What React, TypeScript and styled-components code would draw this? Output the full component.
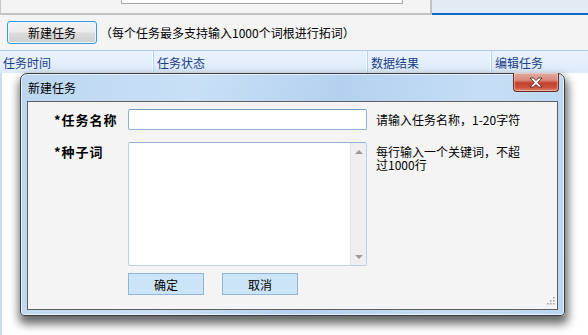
import styled, { createGlobalStyle } from "styled-components";

const GlobalStyle = createGlobalStyle`
    html, body {
        margin: 0;
        padding: 0;
        background: #ffffff;
    }
    body {
        font-family: "Noto Sans CJK SC", "Liberation Sans", sans-serif;
        font-size: 12px;
        color: #000;
    }
`;

const Page = styled.div`
    position: relative;
    width: 588px;
    height: 335px;
    overflow: hidden;
    display: flex;
    flex-direction: column;
    background: #ffffff;
`;

const TopStrip = styled.div`
    display: flex;
    height: 15px;
    flex-shrink: 0;
    background: #f4f4f4;
`;

const SearchPanel = styled.div`
    box-sizing: border-box;
    width: 432px;
    height: 15px;
    display: flex;
    align-items: flex-start;
    padding-left: 120px;
    border-left: 1px solid #c8c8c8;
    border-right: 2px solid #c2c2c2;
    border-bottom: 2px solid #c2c2c2;
`;

const SearchStub = styled.div`
    box-sizing: border-box;
    width: 282px;
    height: 4px;
    background: #ffffff;
    border: 1px solid #a9a9a9;
    border-top: none;
`;

const TabStrip = styled.div`
    flex: 1;
    box-sizing: border-box;
    height: 15px;
    background: #e3eaf3;
    border-bottom: 2px solid #0f6bc6;
`;

const Toolbar = styled.div`
    display: flex;
    align-items: center;
    height: 35px;
    padding: 0 0 5px 7px;
    box-sizing: border-box;
    background: #f4f4f4;
    flex-shrink: 0;
`;

const ToolButton = styled.button`
    box-sizing: border-box;
    width: 90px;
    height: 23px;
    margin-top: 4px;
    padding: 0;
    border: 1px solid #3c9be0;
    border-radius: 3px;
    background: linear-gradient(#f3f3f3 0%, #ebebeb 48%, #dcdcdc 52%, #cfcfcf 100%);
    box-shadow: inset 0 0 0 1px #eaf4fc;
    font-family: inherit;
    font-size: 12px;
    color: #000;
`;

const ToolHint = styled.span`
    margin: 4px 0 0 3px;
    font-size: 12px;
    color: #000;
`;

const HeaderRow = styled.div`
    display: flex;
    height: 23px;
    flex-shrink: 0;
    box-sizing: border-box;
    border-top: 1px solid #a9cbeb;
    background: linear-gradient(#eaf3fc, #dcebf9);
`;

const HeaderCell = styled.div<{ $w?: number }>`
    box-sizing: border-box;
    ${(p) => (p.$w ? `width: ${p.$w}px;` : "flex: 1;")}
    display: flex;
    align-items: center;
    padding-left: 3px;
    color: #1c3f89;
    font-size: 12px;
    border-right: 1px solid #b4d1ee;
    box-shadow: inset -1px 0 0 #f6fbff;
    &:last-child {
        border-right: none;
        box-shadow: none;
    }
`;

const TableBody = styled.div`
    flex: 1;
    background: #ffffff;
    border-left: 2px solid #c8ddf1;
`;

const Dialog = styled.div`
    position: absolute;
    left: 20px;
    top: 73px;
    width: 545px;
    height: 243px;
    box-sizing: border-box;
    display: flex;
    flex-direction: column;
    border: 1px solid #3e3e3e;
    border-radius: 7px 7px 4px 4px;
    background: linear-gradient(100deg, #bcd7f1 0%, #c9e0f6 30%, #b3d1ef 55%, #c6def5 80%, #bad6f1 100%);
    box-shadow: inset 0 0 0 1px rgba(255, 255, 255, 0.6), 1px 6px 10px 2px rgba(0, 0, 0, 0.6);
`;

const TitleBar = styled.div`
    position: relative;
    height: 27px;
    flex-shrink: 0;
    display: flex;
    align-items: center;
    padding-left: 7px;
    font-size: 12px;
    color: #000;
`;

const CloseButton = styled.div`
    position: absolute;
    right: 5px;
    top: -1px;
    width: 46px;
    height: 19px;
    box-sizing: border-box;
    border: 1px solid #6d2b22;
    border-top: none;
    border-radius: 0 0 4px 4px;
    background: linear-gradient(#e0aaa0 0%, #d88a7c 40%, #c5402b 55%, #c9513c 80%, #dc8a72 100%);
    display: flex;
    align-items: center;
    justify-content: center;
    box-shadow: inset 0 0 0 1px rgba(255, 220, 210, 0.5);
`;

const Client = styled.div`
    position: relative;
    flex: 1;
    margin: 0 6px 5px 6px;
    box-sizing: border-box;
    border: 1px solid #5e5e5e;
    background: #f4f4f4;
    display: grid;
    grid-template-columns: 91px 239px 150px;
    grid-template-rows: 21px 124px 22px;
    column-gap: 9px;
    row-gap: 12px;
    padding-top: 7px;
    align-content: start;
`;

const FieldLabel = styled.div<{ $top?: boolean }>`
    padding-left: 26px;
    display: flex;
    align-items: ${(p) => (p.$top ? "flex-start" : "center")};
    font-size: 13px;
    font-weight: 700;
    letter-spacing: 1px;
    white-space: nowrap;
`;

const TextInput = styled.input`
    box-sizing: border-box;
    width: 239px;
    height: 21px;
    margin: 0;
    border: 1px solid #8fb3d6;
    border-top-color: #6f99c2;
    border-radius: 2px;
    background: #ffffff;
    outline: none;
`;

const AreaBox = styled.div`
    box-sizing: border-box;
    display: flex;
    border: 1px solid #b9d2ea;
    border-top-color: #8fb1d4;
    border-radius: 2px;
    background: #ffffff;
`;

const AreaText = styled.textarea`
    flex: 1;
    border: none;
    outline: none;
    resize: none;
    background: transparent;
    font-family: inherit;
`;

const ScrollTrack = styled.div`
    width: 16px;
    display: flex;
    flex-direction: column;
    justify-content: space-between;
    align-items: center;
    padding: 7px 0 6px;
    box-sizing: border-box;
    background: #efefef;
    border-left: 1px solid #e4e4e4;
`;

const Arrow = styled.div<{ $down?: boolean }>`
    width: 0;
    height: 0;
    border-left: 4px solid transparent;
    border-right: 4px solid transparent;
    ${(p) => (p.$down ? "border-top: 4px solid #9a9a9a;" : "border-bottom: 4px solid #9a9a9a;")}
`;

const SideHint = styled.div<{ $top?: boolean }>`
    display: flex;
    align-items: ${(p) => (p.$top ? "flex-start" : "center")};
    padding-top: ${(p) => (p.$top ? "3px" : "0")};
    font-size: 12px;
    line-height: 13px;
`;

const ButtonRow = styled.div`
    grid-column: 2 / 4;
    margin-top: -5px;
    display: flex;
    gap: 18px;
`;

const DialogButton = styled.button`
    box-sizing: border-box;
    width: 76px;
    height: 22px;
    padding: 0;
    border: 1px solid #8fb6da;
    background: #cce4f8;
    font-family: inherit;
    font-size: 12px;
    color: #000;
`;

const Grip = styled.svg`
    position: absolute;
    right: 2px;
    bottom: 2px;
`;

export default function App() {
    return (
        <>
            <GlobalStyle />
            <Page>
                <TopStrip>
                    <SearchPanel>
                        <SearchStub />
                    </SearchPanel>
                    <TabStrip />
                </TopStrip>
                <Toolbar>
                    <ToolButton>新建任务</ToolButton>
                    <ToolHint>（每个任务最多支持输入1000个词根进行拓词）</ToolHint>
                </Toolbar>
                <HeaderRow>
                    <HeaderCell $w={154}>任务时间</HeaderCell>
                    <HeaderCell $w={214}>任务状态</HeaderCell>
                    <HeaderCell $w={124}>数据结果</HeaderCell>
                    <HeaderCell>编辑任务</HeaderCell>
                </HeaderRow>
                <TableBody />

                <Dialog>
                    <TitleBar>
                        新建任务
                        <CloseButton>
                            <svg width="14" height="11" viewBox="0 0 14 11">
                                <path
                                    d="M1 1 H4.5 L7 3.6 L9.5 1 H13 L8.8 5.5 L13 10 H9.5 L7 7.4 L4.5 10 H1 L5.2 5.5 Z"
                                    fill="#ffffff"
                                    stroke="#5a2a24"
                                    strokeWidth="0.9"
                                    strokeLinejoin="round"
                                />
                            </svg>
                        </CloseButton>
                    </TitleBar>
                    <Client>
                        <FieldLabel>*任务名称</FieldLabel>
                        <TextInput />
                        <SideHint>请输入任务名称，1-20字符</SideHint>

                        <FieldLabel $top>*种子词</FieldLabel>
                        <AreaBox>
                            <AreaText />
                            <ScrollTrack>
                                <Arrow />
                                <Arrow $down />
                            </ScrollTrack>
                        </AreaBox>
                        <SideHint $top>每行输入一个关键词，不超过1000行</SideHint>

                        <div />
                        <ButtonRow>
                            <DialogButton>确定</DialogButton>
                            <DialogButton>取消</DialogButton>
                        </ButtonRow>
                        <Grip width="10" height="10" viewBox="0 0 10 10">
                            <g fill="#9c9c9c">
                                <rect x="8" y="0" width="1.5" height="1.5" />
                                <rect x="5" y="3" width="1.5" height="1.5" />
                                <rect x="8" y="3" width="1.5" height="1.5" />
                                <rect x="2" y="6" width="1.5" height="1.5" />
                                <rect x="5" y="6" width="1.5" height="1.5" />
                                <rect x="8" y="6" width="1.5" height="1.5" />
                            </g>
                        </Grip>
                    </Client>
                </Dialog>
            </Page>
        </>
    );
}
